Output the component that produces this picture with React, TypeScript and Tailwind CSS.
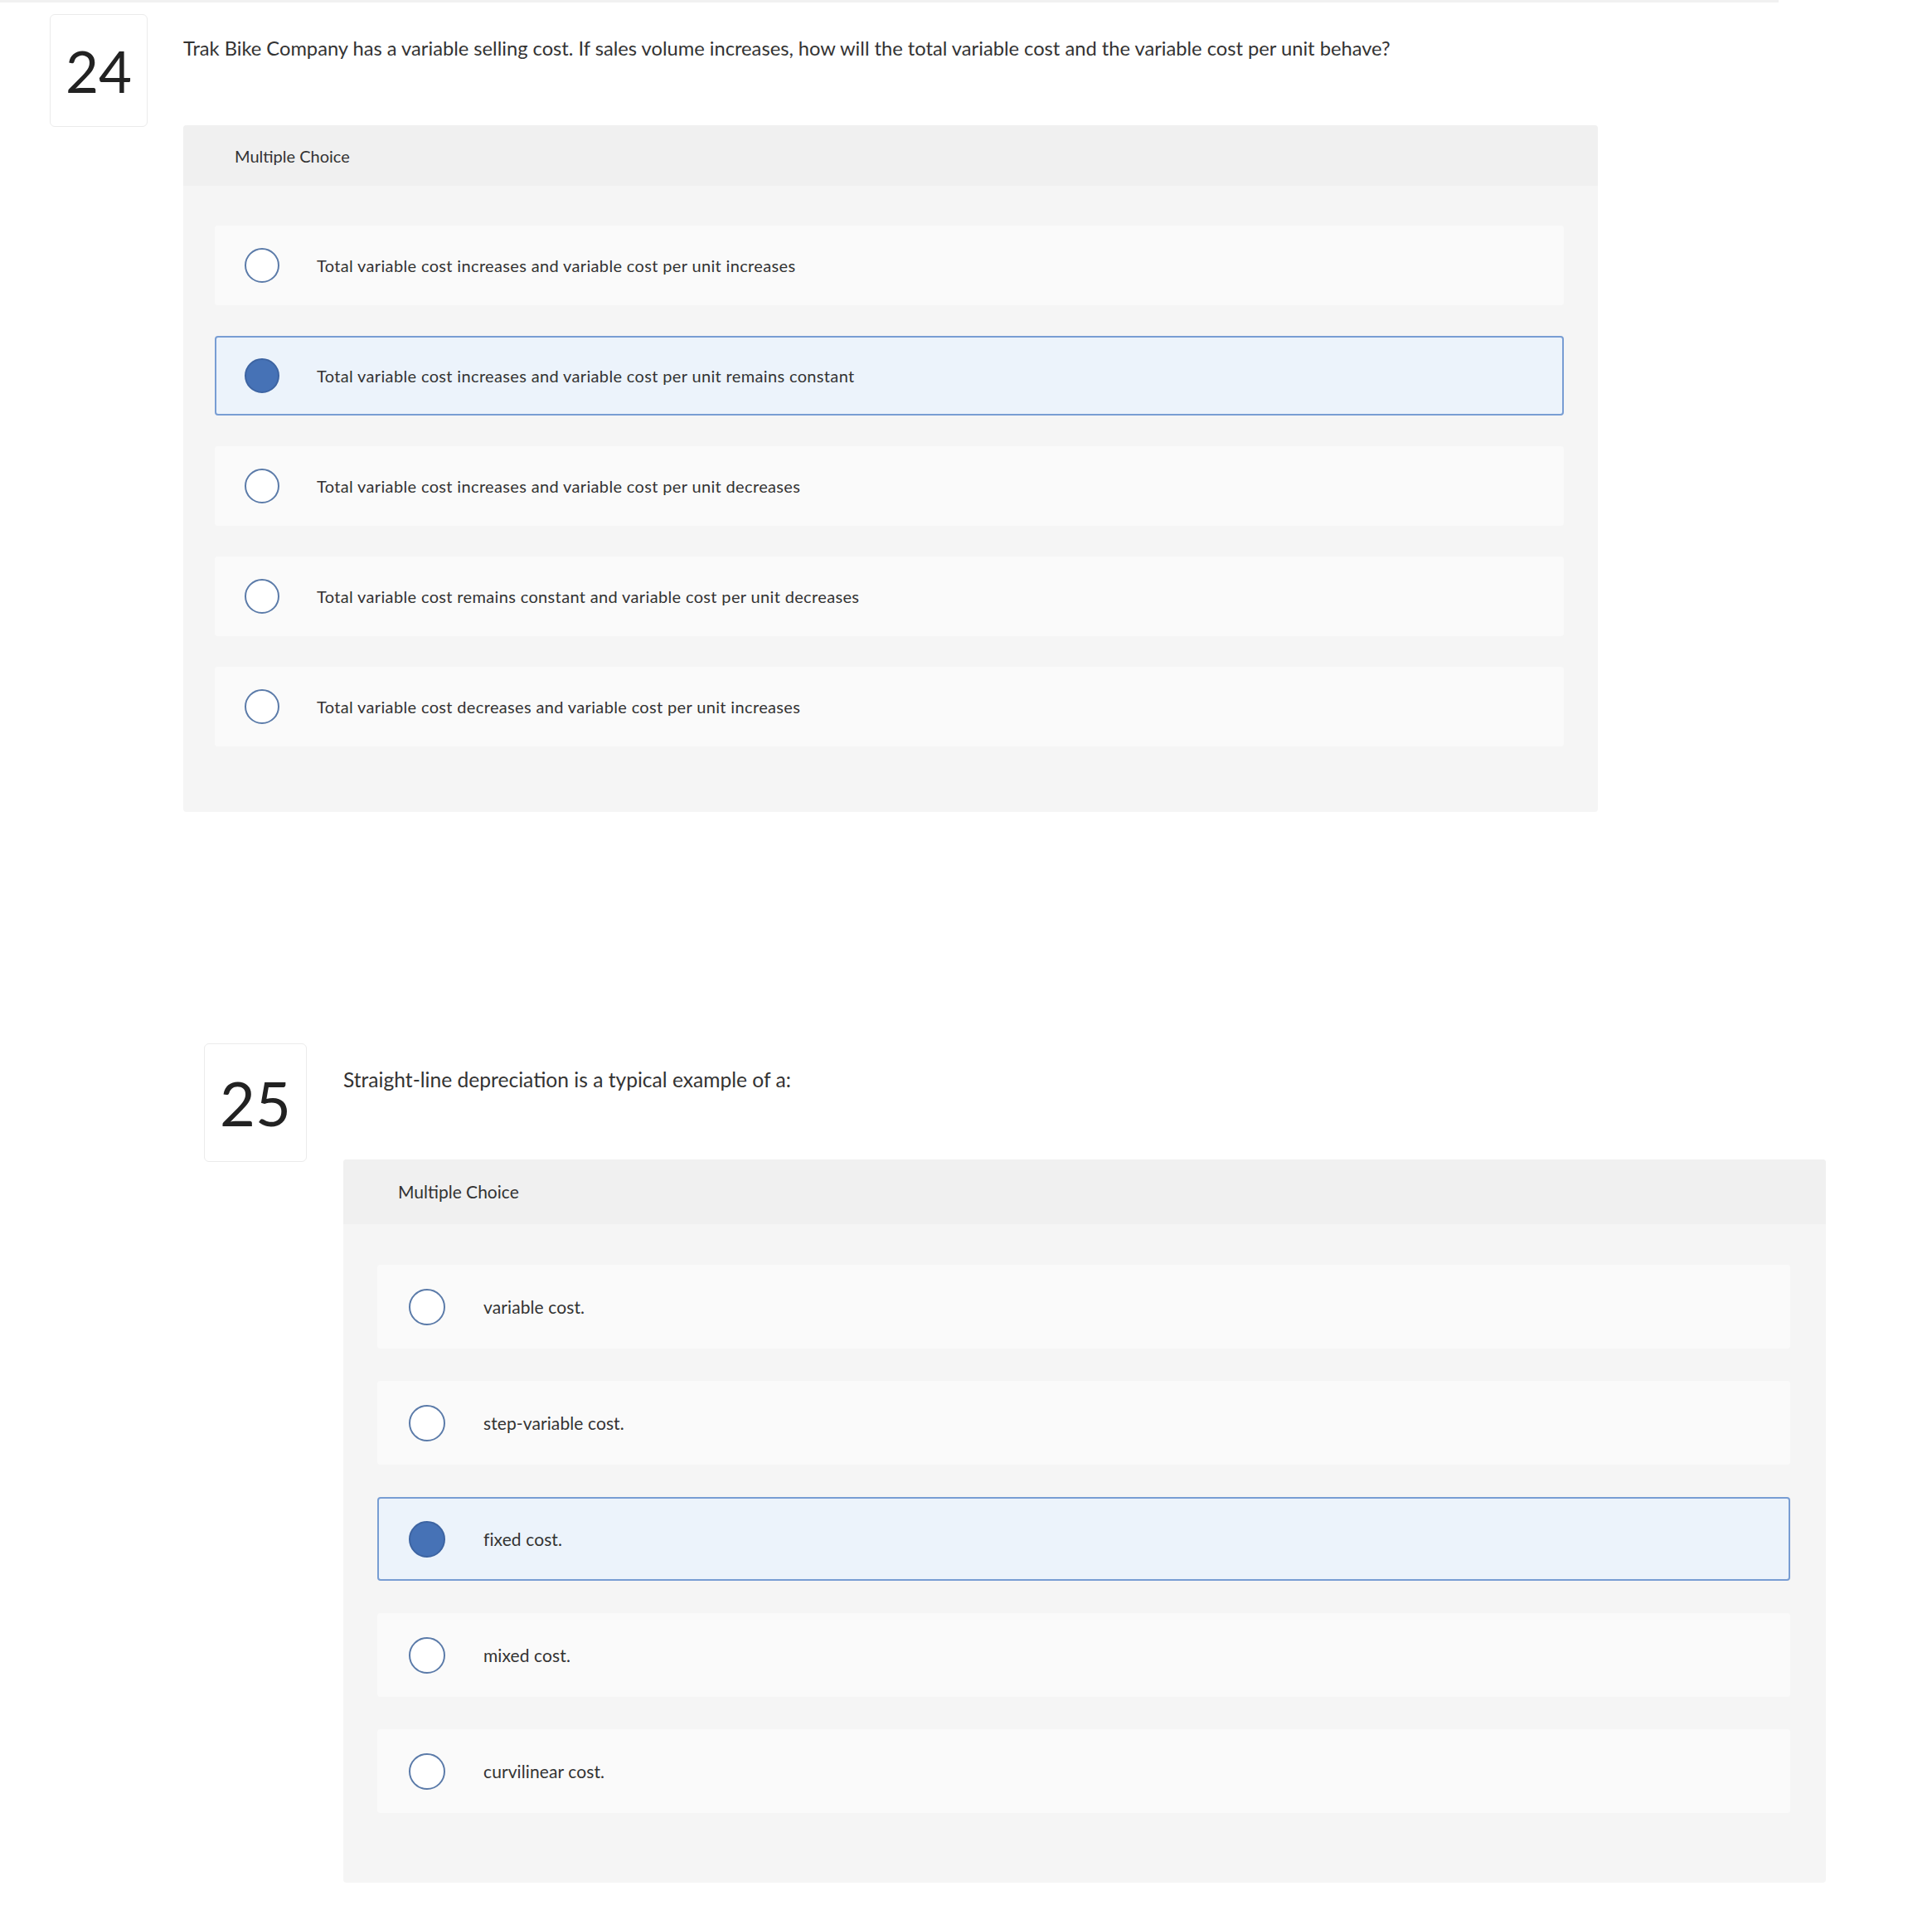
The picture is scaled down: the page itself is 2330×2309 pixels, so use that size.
const font = { fontFamily: "Lato, 'Open Sans', sans-serif" }

type Question = {
  number: number
  text: string
  options: string[]
  selected: number
}

const q24: Question = {
  number: 24,
  text: "Trak Bike Company has a variable selling cost. If sales volume increases, how will the total variable cost and the variable cost per unit behave?",
  options: [
    "Total variable cost increases and variable cost per unit increases",
    "Total variable cost increases and variable cost per unit remains constant",
    "Total variable cost increases and variable cost per unit decreases",
    "Total variable cost remains constant and variable cost per unit decreases",
    "Total variable cost decreases and variable cost per unit increases",
  ],
  selected: 1,
}

const q25: Question = {
  number: 25,
  text: "Straight-line depreciation is a typical example of a:",
  options: ["variable cost.", "step-variable cost.", "fixed cost.", "mixed cost.", "curvilinear cost."],
  selected: 2,
}

function Radio({ checked, size }: { checked: boolean; size: "sm" | "lg" }) {
  const dim = size === "sm" ? "w-[42px] h-[42px]" : "w-[44px] h-[44px]"
  return (
    <span
      className={
        checked
          ? `${dim} shrink-0 rounded-full border-2 border-[#3d64a2] bg-[#4672b6]`
          : `${dim} shrink-0 rounded-full border-2 border-[#5b7ba9] bg-white`
      }
    />
  )
}

export default function App() {
  return (
    <div className="w-[2330px] min-h-[2309px] bg-white text-[#333]" style={font}>
      <div className="h-[3px] w-[2145px] bg-[#f1f1f1]" />

      {/* Question 24 */}
      <div className="flex items-start pl-[60px] pt-[14px]">
        <div className="flex h-[136px] w-[118px] shrink-0 items-center justify-center rounded-md border border-[#ebebeb] bg-white">
          <span className="text-[69px] leading-none text-[#222]">{q24.number}</span>
        </div>
        <div className="ml-[43px] flex flex-col">
          <p className="mt-[24px] text-[23.7px] leading-[34px] text-[#333]">{q24.text}</p>
          <div className="mt-[76px] w-[1706px] overflow-hidden rounded-[4px] bg-[#f5f5f5]">
            <div className="flex h-[73px] items-center bg-[#f0f0f0] pl-[62px] text-[20px] text-[#333]">
              Multiple Choice
            </div>
            <div className="flex flex-col gap-[37px] pb-[79px] pl-[38px] pr-[41px] pt-[48px]">
              {q24.options.map((opt, i) => {
                const on = i === q24.selected
                return (
                  <div
                    key={i}
                    className={
                      on
                        ? "flex h-[96px] items-center rounded-[4px] border-2 border-[#789dd3] bg-[#ecf3fb] pl-[34px]"
                        : "flex h-[96px] items-center rounded-[4px] border-2 border-transparent bg-[#fafafa] pl-[34px]"
                    }
                  >
                    <Radio checked={on} size="sm" />
                    <span className="ml-[45px] text-[20px] tracking-[0.35px] text-[#333]">{opt}</span>
                  </div>
                )
              })}
            </div>
          </div>
        </div>
      </div>

      {/* Question 25 */}
      <div className="mt-[279px] flex items-start pl-[246px]">
        <div className="flex h-[143px] w-[124px] shrink-0 items-center justify-center rounded-md border border-[#ebebeb] bg-white">
          <span className="text-[74px] leading-none text-[#222]">{q25.number}</span>
        </div>
        <div className="ml-[44px] flex flex-col">
          <p className="mt-[26px] text-[24.6px] leading-[36px] text-[#333]">{q25.text}</p>
          <div className="mt-[78px] w-[1788px] overflow-hidden rounded-[4px] bg-[#f5f5f5]">
            <div className="flex h-[78px] items-center bg-[#f0f0f0] pl-[66px] text-[21px] text-[#333]">
              Multiple Choice
            </div>
            <div className="flex flex-col gap-[39px] pb-[84px] pl-[41px] pr-[43px] pt-[49px]">
              {q25.options.map((opt, i) => {
                const on = i === q25.selected
                return (
                  <div
                    key={i}
                    className={
                      on
                        ? "flex h-[101px] items-center rounded-[4px] border-2 border-[#789dd3] bg-[#ecf3fb] pl-[36px]"
                        : "flex h-[101px] items-center rounded-[4px] border-2 border-transparent bg-[#fafafa] pl-[36px]"
                    }
                  >
                    <Radio checked={on} size="lg" />
                    <span className="ml-[46px] text-[21px] tracking-[0.1px] text-[#333]">{opt}</span>
                  </div>
                )
              })}
            </div>
          </div>
        </div>
      </div>
    </div>
  )
}
